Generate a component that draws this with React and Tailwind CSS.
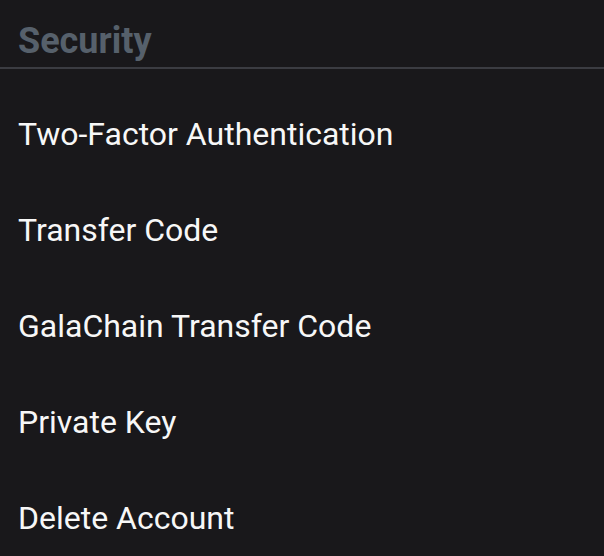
const items = [
  'Two-Factor Authentication',
  'Transfer Code',
  'GalaChain Transfer Code',
  'Private Key',
  'Delete Account',
];

export default function App() {
  return (
    <div className="min-h-[556px] w-full bg-[#19181b] font-['Roboto',sans-serif] overflow-hidden">
      {/* Section Header */}
      <div className="border-b-2 border-[#3b3c42] pl-[18px] pt-[21px] pb-[6px]">
        <h2 className="text-[36px] font-bold leading-[40px] text-[#56606b]">Security</h2>
      </div>

      {/* Rows */}
      <div className="pt-[17px]">
        {items.map((label) => (
          <button
            key={label}
            className="flex h-[96px] w-full items-center pl-[18px] text-left"
          >
            <span className="text-[32px] leading-[38px] text-[#f7f7f7]">{label}</span>
          </button>
        ))}
      </div>
    </div>
  );
}
